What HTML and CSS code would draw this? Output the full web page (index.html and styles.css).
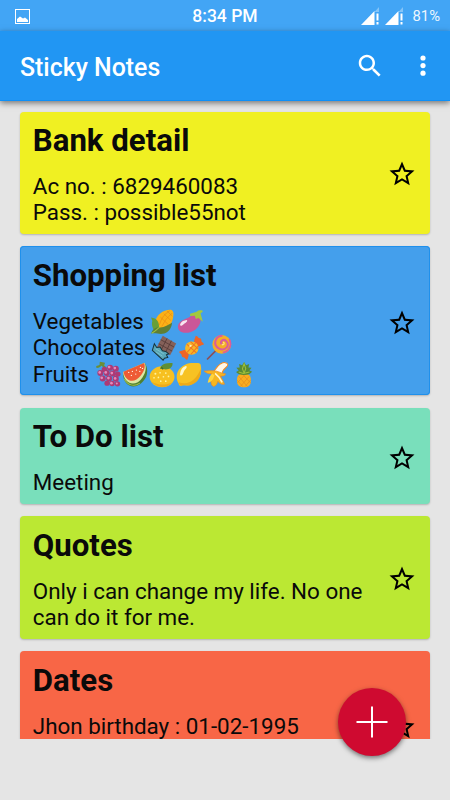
FILE: index.html
```
<!DOCTYPE html>
<html lang="en">
<head>
    <meta charset="UTF-8">
    <meta name="viewport" content="width=device-width, initial-scale=1.0">
    <title>Sticky Notes</title>
    <link rel="stylesheet" href="styles.css">
</head>
<body>
    <!-- Shared icons -->
    <svg class="defs" width="0" height="0">
        <symbol id="star" viewBox="0 0 24 24">
            <path d="M22 9.24l-7.19-.62L12 2 9.19 8.63 2 9.24l5.46 4.73L5.82 21 12 17.27 18.18 21l-1.63-7.03L22 9.24zM12 15.4l-3.76 2.27 1-4.28-3.32-2.88 4.38-.38L12 6.1l1.71 4.04 4.38.38-3.32 2.88 1 4.28L12 15.4z"/>
        </symbol>
        <symbol id="signal" viewBox="0 0 18 18">
            <path d="M18 0v5h-4.5z" fill="#fff" opacity=".35"/>
            <path d="M13.5 4v14H0z" fill="#fff"/>
            <path d="M15.5 6.500h2v7h-2zM15.5 15h2v2.500h-2z" fill="#fff"/>
        </symbol>
    </svg>

    <!-- Status bar -->
    <div class="status-bar">
        <svg class="picture-icon" viewBox="0 0 15 15">
            <rect x=".5" y=".5" width="14" height="14" fill="none" stroke="#fff"/>
            <path d="M2 13V10l3-2.500 3 2 2-1 3 2.500v2z" fill="#fff"/>
        </svg>
        <span class="clock">8:34 PM</span>
        <div class="status-right">
            <svg class="signal"><use href="#signal"/></svg>
            <svg class="signal"><use href="#signal"/></svg>
            <span class="battery">81%</span>
        </div>
    </div>

    <!-- App bar -->
    <header class="app-bar">
        <h1>Sticky Notes</h1>
        <svg class="search-icon" viewBox="0 0 24 24">
            <path d="M15.5 14h-.79l-.28-.27C15.41 12.59 16 11.11 16 9.5 16 5.91 13.09 3 9.5 3S3 5.91 3 9.5 5.91 16 9.5 16c1.61 0 3.09-.59 4.23-1.57l.27.28v.79l5 4.99L20.49 19l-4.99-5zm-6 0C7.01 14 5 11.99 5 9.5S7.01 5 9.5 5 14 7.01 14 9.5 11.99 14 9.5 14z" fill="#fff"/>
        </svg>
        <svg class="more-icon" viewBox="0 0 6 22">
            <circle cx="3" cy="3" r="2.600" fill="#fff"/>
            <circle cx="3" cy="10.600" r="2.600" fill="#fff"/>
            <circle cx="3" cy="18.200" r="2.600" fill="#fff"/>
        </svg>
    </header>

    <!-- Notes -->
    <main class="notes">
        <article class="note yellow">
            <div class="note-text">
                <h2>Bank detail</h2>
                <p>Ac no. : 6829460083<br>Pass. : possible55not</p>
            </div>
            <svg class="star"><use href="#star"/></svg>
        </article>

        <article class="note blue">
            <div class="note-text">
                <h2>Shopping list</h2>
                <p>Vegetables
                    <span class="emojis">
                        <!-- corn -->
                        <svg viewBox="0 0 81 81">
                            <path d="M17 45C21 20 43 4 65 5c8 2 9 11 7 21C70 46 58 62 36 67z" fill="#fbb117"/>
                            <path d="M31 50Q40 20 62 8M38 55Q49 31 69 15M34 27l23 22M44 17l22 21M54 9l16 16" fill="none" stroke="#e88a12" stroke-width="2"/>
                            <path d="M6 28c18 2 25 14 24 32-1 7-4 10-9 12C10 65 7 48 10 39z" fill="#689f38"/>
                            <path d="M6 76c5-14 15-20 28-18 12 0 24-9 35-14-3 20-13 31-29 33-12 1-22-4-34-1z" fill="#5f7f34"/>
                            <path d="M8 75c10-4 16-13 24-18" fill="none" stroke="#a2c43d" stroke-width="3"/>
                        </svg>
                        <!-- eggplant -->
                        <svg viewBox="0 0 81 81">
                            <path d="M47 21c13-5 26 6 23 19-4 20-23 34-44 34C10 74 1 65 3 52 7 35 33 32 47 21z" fill="#cb5798"/>
                            <path d="M10 47c3-7 11-10 19-11 5 3-4 9-10 13-6 6-12 5-9-2z" fill="#fff" opacity=".85"/>
                            <path d="M39 17l15-4c5 0 8-6 14-6 7-1 10 1 8 5l-6 4 7 25-13-11-8 3-3-10-14 1z" fill="#a4c93d"/>
                        </svg>
                    </span><br>Chocolates
                    <span class="emojis">
                        <!-- chocolate bar -->
                        <svg viewBox="0 0 81 81">
                            <path d="M35 5l40 23-18 35-40-23z" fill="#85615a"/>
                            <path d="M48 13L30 48M61 20L43 55M29 17l40 22M23 29l40 22" stroke="#553a36" stroke-width="2.500"/>
                            <path d="M10 29l7 11 10-1 7 11 10 2 9 7-7 3 4 8-10 2-4 6L4 49z" fill="#58a6b7" stroke="#17333a" stroke-width="3"/>
                            <path d="M14 44l24 15M14 53l20 13" stroke="#8fd0d8" stroke-width="2"/>
                        </svg>
                        <!-- candy -->
                        <svg viewBox="0 0 81 81">
                            <path d="M49 28c-3-9 2-16 4-23 7 1 6 7 12 8 5 0 5 6 5 9 3 4 8 5 7 9-9 2-16 8-23 5z" fill="#ef6526"/>
                            <path d="M31 55c3 9-2 15-3 22-7-1-6-7-12-8-5 0-5-6-6-9-3-3-8-4-6-8 9-2 16-8 23-4z" fill="#ef6526"/>
                            <circle cx="41" cy="42" r="20" fill="#f9b626"/>
                            <path d="M26 30l29 26M37 23l23 21M53 26L27 55M60 36L38 61" stroke="#ef7525" stroke-width="3"/>
                            <path d="M35 31l7 4-8 5z" fill="#fff3c4"/>
                        </svg>
                        <!-- lollipop -->
                        <svg viewBox="0 0 81 81">
                            <path d="M36 46L6 76" stroke="#8d4f57" stroke-width="5"/>
                            <circle cx="50" cy="31" r="28" fill="#f4ad27"/>
                            <path d="M50 31c-8-9 5-18 13-10 14 13-4 32-22 22-20-12-9-38 11-38" fill="none" stroke="#d95d9b" stroke-width="6"/>
                            <path d="M72 15c10 17 0 37-19 40" fill="none" stroke="#d95d9b" stroke-width="5"/>
                            <path d="M50 31c6 4 10-5 4-7" fill="none" stroke="#ffe082" stroke-width="4"/>
                        </svg>
                    </span><br>Fruits
                    <span class="emojis">
                        <!-- grapes -->
                        <svg viewBox="0 0 81 81">
                            <path d="M4 18c8-1 12-3 15-9M19 9l14 14M14 5l15 3" fill="none" stroke="#6b8e35" stroke-width="6"/>
                            <g fill="#ad3975">
                                <circle cx="28" cy="25" r="8"/><circle cx="45" cy="20" r="9"/><circle cx="62" cy="23" r="9"/>
                                <circle cx="16" cy="36" r="9"/><circle cx="35" cy="36" r="9"/><circle cx="53" cy="37" r="9"/><circle cx="68" cy="39" r="8"/>
                                <circle cx="23" cy="52" r="9"/><circle cx="42" cy="52" r="9"/><circle cx="62" cy="53" r="9"/>
                                <circle cx="36" cy="66" r="8"/><circle cx="51" cy="67" r="8"/><circle cx="67" cy="68" r="8"/>
                            </g>
                            <g fill="#e58bbb">
                                <circle cx="42" cy="18" r="4"/><circle cx="59" cy="21" r="4"/><circle cx="14" cy="34" r="4"/><circle cx="32" cy="34" r="4"/>
                                <circle cx="50" cy="36" r="4"/><circle cx="20" cy="50" r="4"/><circle cx="40" cy="51" r="4"/><circle cx="60" cy="52" r="4"/>
                                <circle cx="49" cy="66" r="4"/><circle cx="65" cy="67" r="3"/>
                            </g>
                        </svg>
                        <!-- watermelon -->
                        <svg viewBox="0 0 81 81">
                            <path d="M3 35C3 80 45 92 70 51c8-15 6-36-3-46z" fill="#4f812f"/>
                            <path d="M3 33c4 38 38 46 58 16 10-15 13-32 6-44z" fill="#dce7a2"/>
                            <path d="M4 32c7 31 33 36 52 11C67 29 70 17 66 6z" fill="#ee5b35"/>
                            <path d="M7 53c8 18 29 26 46 13" fill="none" stroke="#a3bd4d" stroke-width="3"/>
                            <g fill="#fff1df">
                                <circle cx="20" cy="34" r="2"/><circle cx="31" cy="31" r="2"/><circle cx="43" cy="27" r="2"/><circle cx="55" cy="19" r="2"/>
                                <circle cx="28" cy="43" r="2"/><circle cx="41" cy="39" r="2"/><circle cx="53" cy="31" r="2"/><circle cx="61" cy="22" r="2"/>
                            </g>
                        </svg>
                        <!-- tangerine -->
                        <svg viewBox="0 0 81 81">
                            <ellipse cx="39" cy="47" rx="37" ry="31" fill="#f7c020"/>
                            <path d="M8 62c15 20 47 20 62 1-18 10-44 10-62-1z" fill="#eda91b"/>
                            <path d="M33 24c1-11 12-20 37-18 2 14-14 22-27 18z" fill="#5f8f35"/>
                            <path d="M42 25l-5-7" stroke="#436b28" stroke-width="4"/>
                            <g fill="#fff3a0">
                                <circle cx="19" cy="38" r="3"/><circle cx="33" cy="35" r="2.500"/><circle cx="50" cy="36" r="2.500"/><circle cx="15" cy="50" r="2.500"/>
                                <circle cx="28" cy="49" r="2.500"/><circle cx="43" cy="47" r="2.500"/><circle cx="58" cy="46" r="2.500"/><circle cx="35" cy="60" r="2.500"/><circle cx="50" cy="60" r="2.500"/>
                            </g>
                        </svg>
                        <!-- lemon -->
                        <svg viewBox="0 0 81 81">
                            <path d="M66 6c4 0 9 4 8 9 5 24-8 49-30 56-9 3-18 1-25 1-5 4-11 1-11-5C-5 46 4 21 27 11 40 4 53 6 66 6z" fill="#f7c223"/>
                            <path d="M8 63c28 11 51-5 66-40 2 25-11 44-32 49-8 2-17-1-23 1-5 2-10-2-11-10z" fill="#eeaa17"/>
                            <path d="M12 38c2-13 8-20 17-23 4 0 4 4 1 7-7 6-7 12-11 19-3 4-8 3-7-3z" fill="#fff8ca"/>
                        </svg>
                        <!-- banana -->
                        <svg viewBox="0 0 81 81">
                            <path d="M25 36C35 34 37 18 53 8c9-5 20-4 21 2 1 9-12 10-16 22-1 9-6 17-12 20z" fill="#fff8e8" stroke="#f28b23" stroke-width="3"/>
                            <path d="M25 37C18 39 9 36 3 30c7 0 17-2 26-1 15-1 25 9 38 9 0 6-7 8-16 6 6 10 10 17 13 25-8 2-15-2-20-9-2 9-5 13-12 16-9-3-10-15-7-39z" fill="#f6b621" stroke="#f08b20" stroke-width="2"/>
                            <path d="M27 38c-8 7-11 16-13 27 10-1 18-11 20-23z" fill="#ffd53c"/>
                            <path d="M36 37c9 7 16 17 21 27" fill="none" stroke="#fff5ce" stroke-width="5"/>
                        </svg>
                        <!-- pineapple -->
                        <svg viewBox="0 0 81 81">
                            <rect x="18" y="37" width="41" height="41" rx="16" fill="#f9ad20"/>
                            <path d="M23 46l26 30M34 39l25 27M18 57l18 20M54 46L28 76M43 39L19 65M58 57L42 76" stroke="#e58b1b" stroke-width="2"/>
                            <path d="M39 3l6 10 9-4-2 10 9 1-6 8 8 4c-5 6-12 10-24 10S20 39 15 33l8-5-7-8 10-1-2-10 9 4z" fill="#578a35"/>
                            <path d="M39 8l5 15-5 13-5-13zM23 33l14 4 18-4" fill="none" stroke="#a0bf39" stroke-width="3"/>
                        </svg>
                    </span>
                </p>
            </div>
            <svg class="star"><use href="#star"/></svg>
        </article>

        <article class="note teal">
            <div class="note-text">
                <h2>To Do list</h2>
                <p>Meeting</p>
            </div>
            <svg class="star"><use href="#star"/></svg>
        </article>

        <article class="note green">
            <div class="note-text">
                <h2>Quotes</h2>
                <p>Only i can change my life. No one can do it for me.</p>
            </div>
            <svg class="star"><use href="#star"/></svg>
        </article>

        <article class="note orange">
            <div class="note-text">
                <h2>Dates</h2>
                <p>Jhon birthday : 01-02-1995<br>&nbsp;<br>&nbsp;</p>
            </div>
            <svg class="star"><use href="#star"/></svg>
        </article>
    </main>

    <button class="add-button" aria-label="Add note">
        <svg viewBox="0 0 32 32">
            <path d="M16 .5v31M.5 16h31" stroke="#fff" stroke-width="2"/>
        </svg>
    </button>
</body>
</html>
```
FILE: styles.css
```
* {
    box-sizing: border-box;
}

body {
    font-family: Roboto, "Liberation Sans", sans-serif;
    margin: 0;
    height: 800px;
    overflow: hidden;
    background-color: #e5e5e5;
    color: #0a0a0a;
}

h1, h2, p {
    margin: 0;
}

.defs {
    position: absolute;
}

/* Status bar */
.status-bar {
    display: grid;
    grid-template-columns: 1fr auto 1fr;
    align-items: center;
    height: 31px;
    padding: 1px 10px 0 15px;
    background-color: #42a5f5;
    color: white;
}

.picture-icon {
    width: 15px;
    height: 15px;
}

.clock {
    font-size: 17.5px;
    font-weight: 500;
    margin-right: 5px;
}

.status-right {
    display: flex;
    justify-content: flex-end;
    align-items: center;
    gap: 6px;
}

.signal {
    width: 18px;
    height: 18px;
}

.battery {
    font-size: 14.8px;
    margin-left: 4px;
    opacity: 0.9;
}

/* App bar */
.app-bar {
    position: relative;
    display: flex;
    align-items: center;
    height: 70px;
    padding: 1px 24.5px 0 20px;
    background-color: #2196f3;
    border-bottom: 1px solid #0c8ff8;
    box-shadow: 0 2px 6px rgba(0, 0, 0, 0.5);
    color: white;
}

.app-bar h1 {
    flex: 1;
    padding-top: 2px;
    font-size: 24.9px;
    font-weight: 500;
}

.search-icon {
    width: 30px;
    height: 30px;
    margin-right: 34.5px;
}

.more-icon {
    width: 6px;
    height: 22px;
}

/* Notes */
.notes {
    display: flex;
    flex-direction: column;
    gap: 12.8px;
    height: 638px;
    padding: 10.5px 20px 0;
    overflow: hidden;
}

.note {
    display: flex;
    flex-shrink: 0;
    align-items: center;
    padding: 11.6px 13px 8px 12.8px;
    border-radius: 4px;
    box-shadow: 0 1px 2px rgba(0, 0, 0, 0.22);
}

.note-text {
    flex: 1;
}

.note h2 {
    font-size: 31.2px;
    font-weight: 700;
    line-height: 36px;
    margin-bottom: 14px;
}

.note p {
    font-size: 22.4px;
    line-height: 26.3px;
}

.star {
    width: 30px;
    height: 30px;
}

.emojis {
    display: inline-flex;
    height: 26.3px;
    vertical-align: top;
}

.emojis svg {
    width: 27.2px;
    height: 27.2px;
}

.yellow {
    background-color: #f0f022;
}

.blue {
    background-color: #449fec;
    box-shadow: inset 0 0 0 1px #1f90ec, 0 1px 2px rgba(0, 0, 0, 0.22);
}

.teal {
    background-color: #79dfbb;
}

.green {
    background-color: #bbe833;
}

.orange {
    background-color: #f86646;
}

/* Floating button */
.add-button {
    position: absolute;
    left: 338px;
    top: 688px;
    display: flex;
    align-items: center;
    justify-content: center;
    width: 68px;
    height: 68px;
    padding: 0;
    border: none;
    border-radius: 50%;
    background-color: #cf0a30;
    box-shadow: 0 2px 5px rgba(0, 0, 0, 0.5);
}

.add-button svg {
    width: 32px;
    height: 32px;
}
```
